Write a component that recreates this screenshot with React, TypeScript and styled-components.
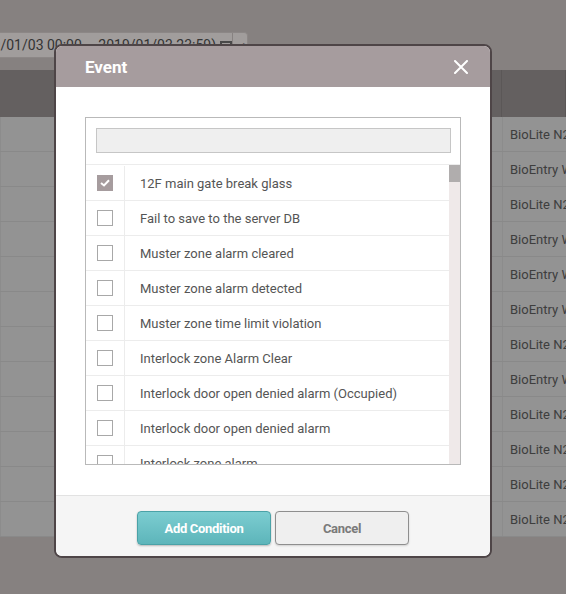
import React from 'react';
import styled, { createGlobalStyle } from 'styled-components';

const GlobalStyle = createGlobalStyle`
  html, body {
    margin: 0;
    padding: 0;
  }
  body {
    width: 566px;
    height: 594px;
    overflow: hidden;
    background: #cec6c5;
    font-family: Roboto, 'Noto Sans', Arial, sans-serif;
  }
`;

const devices = [
  'BioLite N2',
  'BioEntry W2',
  'BioLite N2',
  'BioEntry W2',
  'BioEntry W2',
  'BioEntry W2',
  'BioLite N2',
  'BioEntry W2',
  'BioLite N2',
  'BioLite N2',
  'BioLite N2',
  'BioLite N2',
];

const events = [
  { name: '12F main gate break glass', checked: true },
  { name: 'Fail to save to the server DB', checked: false },
  { name: 'Muster zone alarm cleared', checked: false },
  { name: 'Muster zone alarm detected', checked: false },
  { name: 'Muster zone time limit violation', checked: false },
  { name: 'Interlock zone Alarm Clear', checked: false },
  { name: 'Interlock door open denied alarm (Occupied)', checked: false },
  { name: 'Interlock door open denied alarm', checked: false },
  { name: 'Interlock zone alarm', checked: false },
];

const App: React.FC = () => {
  return (
    <>
      <GlobalStyle />
      <Page>
        <Toolbar>
          <DateRange>
            <DateText>2019/01/03 00:00 ~ 2019/01/03 23:59)</DateText>
            <CalendarIcon />
            <DateButton>▸</DateButton>
          </DateRange>
        </Toolbar>
        <TableHead>
          <HeadCell />
          <HeadCell />
        </TableHead>
        {devices.map((d, i) => (
          <TableRow key={i}>
            <Cell />
            <Cell>{d}</Cell>
          </TableRow>
        ))}
      </Page>

      <Backdrop />

      <Modal>
        <ModalHeader>
          <Title>Event</Title>
          <CloseButton aria-label="close">
            <svg width="14" height="14" viewBox="0 0 14 14">
              <path d="M1 1 L13 13 M13 1 L1 13" stroke="#fff" strokeWidth="2" strokeLinecap="round" />
            </svg>
          </CloseButton>
        </ModalHeader>

        <ModalBody>
          <ListBox>
            <SearchArea>
              <SearchInput />
            </SearchArea>
            <ListScroller>
              <Rows>
                {events.map((e) => (
                  <EventRow key={e.name}>
                    <CheckCell>
                      <CheckBox checked={e.checked}>
                        {e.checked && (
                          <svg width="10" height="8" viewBox="0 0 10 8">
                            <path d="M1 4 L4 6.5 L9 1.2" fill="none" stroke="#fff" strokeWidth="2" />
                          </svg>
                        )}
                      </CheckBox>
                    </CheckCell>
                    <EventName>{e.name}</EventName>
                  </EventRow>
                ))}
              </Rows>
              <ScrollTrack>
                <ScrollThumb />
              </ScrollTrack>
            </ListScroller>
          </ListBox>
        </ModalBody>

        <ModalFooter>
          <PrimaryButton>Add Condition</PrimaryButton>
          <SecondaryButton>Cancel</SecondaryButton>
        </ModalFooter>
      </Modal>
    </>
  );
};

const Page = styled.div`
  display: flex;
  flex-direction: column;
  width: 566px;
  height: 594px;
`;

const Toolbar = styled.div`
  height: 70px;
  padding-top: 32px;
  box-sizing: border-box;
`;

const DateRange = styled.div`
  display: flex;
  align-items: center;
  width: 248px;
  height: 26px;
  background: #f7f1f0;
  border: 1px solid #d8d0ce;
  border-left: none;
  border-radius: 0 4px 4px 0;
  box-sizing: border-box;
  overflow: hidden;
`;

const DateText = styled.span`
  margin-left: -31px;
  font-size: 14px;
  color: #505050;
  white-space: nowrap;
`;

const CalendarIcon = styled.span`
  width: 12px;
  height: 8px;
  margin-left: 4px;
  border: 2px solid #707070;
  box-sizing: border-box;
  flex: none;
`;

const DateButton = styled.span`
  margin-left: auto;
  width: 25px;
  height: 100%;
  display: flex;
  align-items: center;
  justify-content: center;
  border-left: 1px solid #d0c8c6;
  color: #707070;
  font-size: 12px;
  flex: none;
`;

const TableHead = styled.div`
  display: grid;
  grid-template-columns: 502px 1fr;
  height: 47px;
  background: #9a9494;
`;

const HeadCell = styled.div`
  border-right: 1px solid #8c8686;
`;

const TableRow = styled.div`
  display: grid;
  grid-template-columns: 502px 1fr;
  height: 35px;
  background: #e2e2e2;
  border-bottom: 1px solid #d3d3d3;
  box-sizing: border-box;
`;

const Cell = styled.div`
  display: flex;
  align-items: center;
  padding-left: 7px;
  font-size: 13px;
  color: #606060;
  white-space: nowrap;
  overflow: hidden;
  border-left: 1px solid #d8d8d8;
`;

const Backdrop = styled.div`
  position: fixed;
  inset: 0;
  background: rgba(0, 0, 0, 0.35);
`;

const Modal = styled.div`
  position: absolute;
  left: 54px;
  top: 44px;
  width: 438px;
  height: 514px;
  display: flex;
  flex-direction: column;
  border: 2px solid #4e4547;
  border-radius: 8px;
  overflow: hidden;
  box-sizing: border-box;
  background: #fff;
`;

const ModalHeader = styled.div`
  flex: none;
  height: 41px;
  display: flex;
  align-items: center;
  justify-content: space-between;
  padding: 1px 22px 0 29px;
  box-sizing: border-box;
  background: #a69c9e;
`;

const Title = styled.h2`
  margin: 0;
  font-size: 17px;
  font-weight: 700;
  color: #fff;
`;

const CloseButton = styled.button`
  display: flex;
  padding: 0;
  border: none;
  background: none;
  cursor: pointer;
`;

const ModalBody = styled.div`
  flex: 1;
  padding: 30px 29px;
  background: #fff;
`;

const ListBox = styled.div`
  display: flex;
  flex-direction: column;
  height: 348px;
  border: 1px solid #b9b9b9;
  box-sizing: border-box;
  overflow: hidden;
`;

const SearchArea = styled.div`
  flex: none;
  padding: 10px 9px 11px 10px;
  border-bottom: 1px solid #ececec;
`;

const SearchInput = styled.div`
  height: 25px;
  background: #efefef;
  border: 1px solid #c6c6c6;
  box-sizing: border-box;
`;

const ListScroller = styled.div`
  flex: 1;
  display: flex;
  overflow: hidden;
`;

const Rows = styled.div`
  flex: 1;
  display: flex;
  flex-direction: column;
  padding-top: 1px;
`;

const EventRow = styled.div`
  flex: none;
  display: flex;
  height: 35px;
  border-bottom: 1px solid #ececec;
  box-sizing: border-box;
`;

const CheckCell = styled.div`
  width: 39px;
  flex: none;
  display: flex;
  align-items: center;
  padding-left: 11px;
  box-sizing: border-box;
  border-right: 1px solid #ececec;
`;

const CheckBox = styled.span<{ checked: boolean }>`
  width: 16px;
  height: 16px;
  display: flex;
  align-items: center;
  justify-content: center;
  box-sizing: border-box;
  background: ${(p) => (p.checked ? '#a69c9e' : '#fff')};
  border: 1px solid ${(p) => (p.checked ? '#a69c9e' : '#a8a8a8')};
`;

const EventName = styled.span`
  display: flex;
  align-items: center;
  padding-left: 15px;
  font-size: 13px;
  color: #555;
  white-space: nowrap;
`;

const ScrollTrack = styled.div`
  width: 11px;
  flex: none;
  background: #efe9e9;
`;

const ScrollThumb = styled.div`
  height: 17px;
  background: #b0adad;
`;

const ModalFooter = styled.div`
  flex: none;
  height: 61px;
  display: flex;
  justify-content: center;
  gap: 4px;
  padding-top: 15px;
  box-sizing: border-box;
  background: #f5f5f5;
  border-top: 1px solid #e2e2e2;
`;

const BaseButton = styled.button`
  width: 134px;
  height: 34px;
  border-radius: 4px;
  font-family: Roboto, Arial, sans-serif;
  font-size: 13px;
  font-weight: 700;
  letter-spacing: -0.3px;
  cursor: pointer;
  box-sizing: border-box;
`;

const PrimaryButton = styled(BaseButton)`
  color: #fff;
  background: linear-gradient(#7ccdd1, #5db5ba);
  border: 1px solid #4aa2a7;
  box-shadow: 0 1px 2px rgba(0, 0, 0, 0.25);
`;

const SecondaryButton = styled(BaseButton)`
  color: #7a7a7a;
  background: #efefef;
  border: 1px solid #8e8e8e;
  box-shadow: 0 1px 2px rgba(0, 0, 0, 0.15);
`;

export default App;
